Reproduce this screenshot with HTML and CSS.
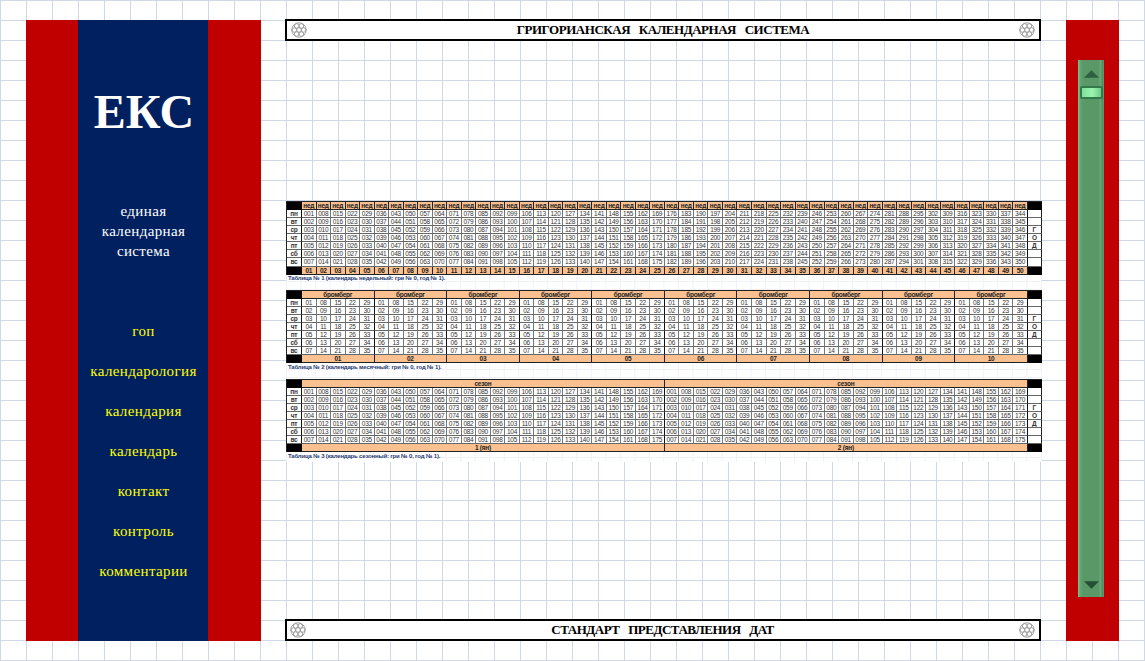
FILE: index.html
```html
<!DOCTYPE html>
<html lang="ru">
<head>
<meta charset="utf-8">
<title>ЕКС</title>
<link rel="stylesheet" href="styles.css">
</head>
<body>
<svg class="defs" width="0" height="0">
  <symbol id="rosette" viewBox="0 0 16 16">
    <g fill="none" stroke="#999" stroke-width="0.9">
      <circle cx="8" cy="8" r="7.2"/>
      <circle cx="8" cy="8" r="2.3"/>
      <circle cx="12.7" cy="8" r="2.3"/><circle cx="3.3" cy="8" r="2.3"/>
      <circle cx="10.35" cy="3.95" r="2.3"/><circle cx="5.65" cy="3.95" r="2.3"/>
      <circle cx="10.35" cy="12.05" r="2.3"/><circle cx="5.65" cy="12.05" r="2.3"/>
    </g>
  </symbol>
</svg>
<div class="page">
  <aside class="flag">
    <div class="panel">
      <h1 class="logo">ЕКС</h1>
      <p class="motto">единая<br>календарная<br>система</p>
      <nav class="menu">
        <a>гоп</a><a>календарология</a><a>календария</a><a>календарь</a><a>контакт</a><a>контроль</a><a>комментарии</a>
      </nav>
    </div>
  </aside>
  <main class="main">
    <header class="bar"><svg class="ros"><use href="#rosette"/></svg><span class="title">ГРИГОРИАНСКАЯ   КАЛЕНДАРНАЯ   СИСТЕМА</span><svg class="ros"><use href="#rosette"/></svg></header>
    <section class="sheet">
      <div class="cal" id="weeks"></div>
      <p class="caption first">Таблица № 1 (календарь недельный: гри № 0, год № 1).</p>
      <div class="cal" id="months"></div>
      <p class="caption">Таблица № 2 (календарь месячный: гри № 0, год № 1).</p>
      <div class="cal" id="seasons"></div>
      <p class="caption">Таблица № 3 (календарь сезонный: гри № 0, год № 1).</p>
    </section>
    <footer class="bar low"><svg class="ros"><use href="#rosette"/></svg><span class="title">СТАНДАРТ   ПРЕДСТАВЛЕНИЯ   ДАТ</span><svg class="ros"><use href="#rosette"/></svg></footer>
  </main>
  <aside class="side">
    <div class="scroll">
      <svg class="arrow" viewBox="0 0 16 8"><path d="M8 0L16 8H0Z" fill="#2c6040"/></svg>
      <div class="thumb"></div>
      <svg class="arrow down" viewBox="0 0 16 8"><path d="M0 0H16L8 8Z" fill="#244f34"/></svg>
    </div>
  </aside>
</div>
<script src="calendar.js"></script>
</body>
</html>
```
FILE: styles.css
```css
body {
  margin: 0;
  width: 1145px;
  height: 661px;
  overflow: hidden;
  font-family: "Liberation Serif", "Times New Roman", serif;
  background-color: #fff;
  background-image:
    linear-gradient(to right, #d0d7e5 1px, transparent 1px),
    linear-gradient(to bottom, #d0d7e5 1px, transparent 1px);
  background-size: 26px 100%, 100% 20px;
}
.defs { display: block; }
.page {
  display: flex;
  box-sizing: border-box;
  height: 661px;
  padding: 20px 26px 20px;
}
.flag {
  box-sizing: border-box;
  width: 235px;
  padding: 0 53px 0 52px;
  background: #c00000;
}
.panel {
  height: 621px;
  background: #002060;
  color: #fff;
  text-align: center;
}
.logo {
  margin: 0;
  padding: 64px 0 0 2px;
  height: 116px;
  font-size: 48px;
  line-height: 56px;
}
.motto {
  margin: 0;
  padding: 1px 0 0 1px;
  font-size: 15px;
  line-height: 20px;
  letter-spacing: 0.37px;
}
.menu {
  display: flex;
  flex-direction: column;
  gap: 20px;
  padding: 60px 0 0 1px;
  font-size: 15px;
  line-height: 20px;
  letter-spacing: 0.37px;
  color: #ff0;
}
.main {
  display: flex;
  flex-direction: column;
  width: 756px;
  margin: -1px 25px 0 24px;
  height: 622px;
}
.bar {
  display: flex;
  justify-content: space-between;
  align-items: center;
  box-sizing: border-box;
  width: 756px;
  height: 22px;
  border: 2px solid #000;
  background: #fff;
  padding: 0 4px;
}
.low { padding-left: 3px; }
.ros { width: 16px; height: 16px; margin-top: -1px; }
.title {
  font-size: 13px;
  font-weight: bold;
  letter-spacing: -0.47px;
  word-spacing: 0.1px;
  white-space: pre;
}
.sheet {
  box-sizing: border-box;
  width: 756px;
  height: 261px;
  margin: 160px 0 157px 1px;
  background-color: #fff;
  background-image:
    linear-gradient(to right, #eef1f7 1px, transparent 1px),
    linear-gradient(to bottom, #eef1f7 1px, transparent 1px);
  background-size: 14.52px 100%, 100% 8px;
  font-family: "Liberation Sans", Arial, sans-serif;
  font-size: 6.5px;
}
.cal {
  display: grid;
  grid-template-columns: 15px repeat(50, 14.52px) 14px;
  grid-template-rows: repeat(9, 8.07px);
  box-sizing: border-box;
  height: 73.6px;
  border-top: 1px solid #222;
  border-left: 1px solid #222;
  width: 756px;
}
.cell {
  box-sizing: border-box;
  border-right: 1px solid #777;
  border-bottom: 1px solid #666;
  background: #fff;
  color: #333;
  line-height: 7.5px;
  letter-spacing: -0.25px;
  text-align: center;
  white-space: nowrap;
  overflow: hidden;
}
.cell.edge { border-right-color: #111; }
.cell.day { font-weight: bold; border-right-color: #111; }
.cell.head { background: #fac090; font-weight: bold; color: #222; border-color: #222; }
.cell.corner { background: #000; border-color: #000; }
.cell.year { border-right-color: #222; font-weight: bold; }
.caption {
  margin: 0;
  height: 15.3px;
  padding-left: 2px;
  font-size: 6px;
  line-height: 8px;
  letter-spacing: -0.18px;
  font-weight: bold;
  color: #1f3a72;
}
.caption.first { line-height: 7px; }
.side {
  box-sizing: border-box;
  width: 53px;
  height: 621px;
  padding: 40px 15px 44px 12px;
  background: #c00000;
}
.scroll {
  display: flex;
  flex-direction: column;
  align-items: center;
  box-sizing: border-box;
  height: 537px;
  padding: 10px 0 8px;
  background: linear-gradient(to right, #7fc58f 0, #62a873 2px, #5a9868 5px, #5a9868 21px, #70ae7e 23px, #4c865b 24px, #5fa06f 26px);
}
.arrow { display: block; width: 15px; height: 8px; }
.down { margin-top: auto; }
.thumb {
  box-sizing: border-box;
  width: 23px;
  height: 13px;
  margin-top: 8px;
  border: 2px solid #33794a;
  border-radius: 2px;
  background: linear-gradient(to right, #80e09a, #9af4b0 55%, #6fca88);
}
```
FILE: calendar.js
```js
const DAYS = ["пн", "вт", "ср", "чт", "пт", "сб", "вс"];
const YEAR = ["", "", "Г", "О", "Д", "", ""];

// Builds one calendar: `span` weeks per group, numbering restarts every group if `restart`
function build(id, span, digits, restart, top, bottom) {
  const root = document.getElementById(id);
  const add = (text, cls, width) => {
    const el = document.createElement("div");
    el.className = "cell " + cls;
    el.textContent = text;
    if (width > 1) el.style.gridColumn = "span " + width;
    root.append(el);
  };
  const band = (label) => {
    add("", "corner", 1);
    for (let g = 0; g < 50 / span; g++) add(label(g + 1), "head", span);
    add("", "corner", 1);
  };
  band(top);
  for (let d = 0; d < 7; d++) {
    add(DAYS[d], "day", 1);
    for (let w = 0; w < 50; w++) {
      const week = restart ? w % span : w;
      const edge = restart && (w + 1) % span === 0 || w === 49;
      add(String(week * 7 + d + 1).padStart(digits, "0"), edge ? "edge" : "", 1);
    }
    add(YEAR[d], "year", 1);
  }
  band(bottom);
}

const two = (n) => String(n).padStart(2, "0");
build("weeks", 1, 3, false, () => "нед", two);
build("months", 5, 2, true, () => "бромберг", two);
build("seasons", 25, 3, true, () => "сезон", (n) => n + " (ян)");
```
